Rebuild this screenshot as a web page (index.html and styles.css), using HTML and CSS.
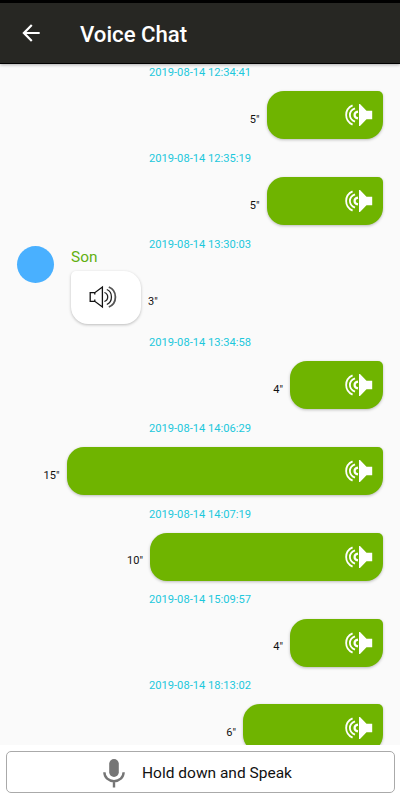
FILE: index.html
```html
<!DOCTYPE html>
<html lang="en">
<head>
  <meta charset="UTF-8">
  <meta name="viewport" content="width=device-width, initial-scale=1.0">
  <title>Voice Chat</title>
  <link rel="stylesheet" href="styles.css">
</head>
<body>
  <!-- Speaker icons shared by all messages -->
  <svg class="defs" width="0" height="0">
    <symbol id="speaker-left" viewBox="0 0 28 24">
      <path fill="#fff" d="M14 1v22h1l6.5-6.8H27.2V7.8h-5.7L15 1h-1z"/>
      <path fill="none" stroke="#fff" stroke-width="1.8" d="M7.6 2.4C-1 6.4-1 17.6 7.6 21.6M10 5.4C3.2 8 3.2 16 10 18.6"/>
      <path fill="none" stroke="#fff" stroke-width="2.2" d="M13 8.6C8.4 9.4 8.4 14.6 13 15.4"/>
    </symbol>
    <symbol id="speaker-right" viewBox="0 0 28 24">
      <path fill="none" stroke="#111" stroke-width="1.3" d="M13.4 2v20L5.8 16.3H1.2V7.7h4.6L13.4 2zM5.8 7.7v1.8M5.8 14.5v1.8"/>
      <path fill="none" stroke="#222" stroke-width="1.3" d="M15.4 7.5c4.4 1.4 4.4 7.6 0 9M17.8 4.5c6.2 2.6 6.2 12.4 0 15"/>
      <path fill="none" stroke="#555" stroke-width="1.8" d="M19.8 2c8.8 3.6 8.8 16.4 0 20"/>
    </symbol>
  </svg>

  <header>
    <svg class="back" width="26" height="26" viewBox="0 0 24 24">
      <path fill="#fff" d="M20 11H7.83l5.59-5.59L12 4l-8 8 8 8 1.41-1.41L7.83 13H20v-2z"/>
    </svg>
    <h1>Voice Chat</h1>
  </header>

  <main>
    <div class="message sent">
      <time>2019-08-14 12:34:41</time>
      <div class="row">
        <span class="seconds">5"</span>
        <div class="bubble s5"><svg class="icon"><use href="#speaker-left"/></svg></div>
      </div>
    </div>
    <div class="message sent">
      <time>2019-08-14 12:35:19</time>
      <div class="row">
        <span class="seconds">5"</span>
        <div class="bubble s5"><svg class="icon"><use href="#speaker-left"/></svg></div>
      </div>
    </div>
    <div class="message received">
      <time>2019-08-14 13:30:03</time>
      <div class="row">
        <div class="avatar"></div>
        <div class="content">
          <div class="name">Son</div>
          <div class="voice">
            <div class="bubble"><svg class="icon"><use href="#speaker-right"/></svg></div>
            <span class="seconds">3"</span>
          </div>
        </div>
      </div>
    </div>
    <div class="message sent">
      <time>2019-08-14 13:34:58</time>
      <div class="row">
        <span class="seconds">4"</span>
        <div class="bubble s4"><svg class="icon"><use href="#speaker-left"/></svg></div>
      </div>
    </div>
    <div class="message sent">
      <time>2019-08-14 14:06:29</time>
      <div class="row">
        <span class="seconds">15"</span>
        <div class="bubble s15"><svg class="icon"><use href="#speaker-left"/></svg></div>
      </div>
    </div>
    <div class="message sent">
      <time>2019-08-14 14:07:19</time>
      <div class="row">
        <span class="seconds">10"</span>
        <div class="bubble s10"><svg class="icon"><use href="#speaker-left"/></svg></div>
      </div>
    </div>
    <div class="message sent">
      <time>2019-08-14 15:09:57</time>
      <div class="row">
        <span class="seconds">4"</span>
        <div class="bubble s4"><svg class="icon"><use href="#speaker-left"/></svg></div>
      </div>
    </div>
    <div class="message sent">
      <time>2019-08-14 18:13:02</time>
      <div class="row">
        <span class="seconds">6"</span>
        <div class="bubble s6"><svg class="icon"><use href="#speaker-left"/></svg></div>
      </div>
    </div>
  </main>

  <footer>
    <button class="speak">
      <svg width="22" height="30" viewBox="0 0 22 30">
        <rect x="6.2" y="1" width="9.6" height="18" rx="4.8" fill="#757575"/>
        <path fill="none" stroke="#757575" stroke-width="2.4" d="M1.4 14.2c0 5.4 4.2 9 9.6 9s9.6-3.6 9.6-9M11 23v6.5"/>
      </svg>
      <span>Hold down and Speak</span>
    </button>
  </footer>
</body>
</html>
```

FILE: styles.css
```css
* {
  box-sizing: border-box;
}
body {
  margin: 0;
  height: 800px;
  display: flex;
  flex-direction: column;
  overflow: hidden;
  font-family: Roboto, sans-serif;
  background-color: #fafafa;
}
.defs {
  display: block;
  flex: none;
}
header {
  flex: none;
  height: 64px;
  display: flex;
  align-items: center;
  padding: 4px 0 0 18px;
  background-color: #272723;
  border-top: 3px solid #000;
  border-bottom: 1px solid #000;
  box-shadow: 0 1px 3px rgba(0, 0, 0, 0.3);
  z-index: 1;
}
.back {
  margin-top: -4px;
}
h1 {
  margin: -2px 0 0 36px;
  font-size: 22.2px;
  font-weight: 500;
  color: #fff;
}
main {
  flex: 1;
  min-height: 0;
  overflow: hidden;
}
.message {
  height: 85.75px;
}
time {
  display: block;
  height: 27.3px;
  line-height: 17px;
  font-size: 11.15px;
  text-align: center;
  color: #1cc8dc;
}
.row {
  display: flex;
}
.bubble {
  height: 48px;
  display: flex;
  align-items: center;
  box-shadow: 0 1px 3px rgba(0, 0, 0, 0.25);
}
.icon {
  width: 28px;
  height: 24px;
}
.seconds {
  font-size: 11px;
  line-height: 14px;
  color: #111;
}
.sent .row {
  justify-content: flex-end;
  align-items: center;
  padding-right: 17px;
}
.sent .seconds {
  margin: 9px 7px 0 0;
}
.sent .bubble {
  justify-content: flex-end;
  padding-right: 10px;
  background-color: #6fb400;
  border-radius: 17px 5px 17px 17px;
}
.s4 {
  width: 93px;
}
.s5 {
  width: 116.5px;
}
.s6 {
  width: 140px;
}
.s10 {
  width: 233px;
}
.s15 {
  width: 316.5px;
}
.received {
  height: 98.5px;
}
.received time {
  height: 10.5px;
}
.avatar {
  width: 37px;
  height: 37px;
  margin: 0 17px 0 17px;
  border-radius: 50%;
  background-color: #49b0ff;
}
.name {
  height: 25px;
  line-height: 23px;
  font-size: 15.4px;
  color: #62b010;
}
.voice {
  display: flex;
  align-items: center;
}
.received .bubble {
  width: 70px;
  height: 52.5px;
  padding-left: 17.5px;
  background-color: #fff;
  border-radius: 5px 17px 17px 17px;
}
.received .seconds {
  margin: 9px 0 0 7px;
}
footer {
  flex: none;
  height: 55px;
  padding: 6px 5.5px 7px;
  background-color: #fff;
}
.speak {
  width: 100%;
  height: 42px;
  display: flex;
  align-items: center;
  justify-content: center;
  gap: 17px;
  padding: 1px 5px 0 0;
  font-family: inherit;
  font-size: 15.5px;
  color: #111;
  background-color: #fff;
  border: 1px solid #aaa;
  border-radius: 5px;
}
```
